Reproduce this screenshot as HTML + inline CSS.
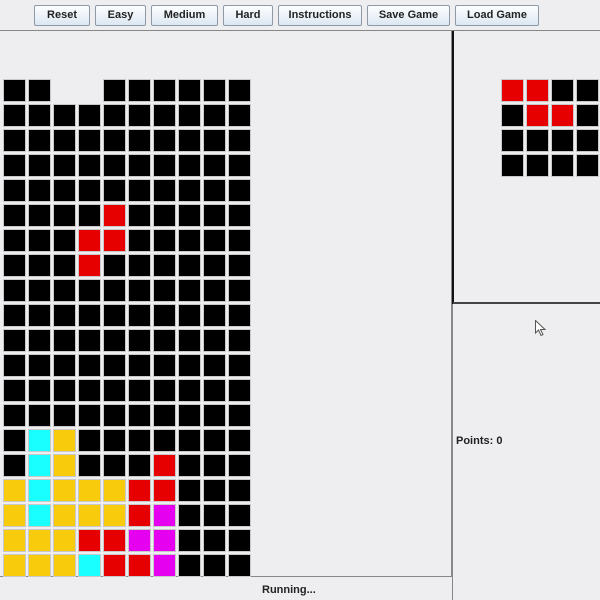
<!DOCTYPE html>
<html><head><style>
body{margin:0;width:600px;height:600px;background:#eeedef;position:relative;overflow:hidden;font-family:"Liberation Sans",sans-serif;}
.btn{position:absolute;top:5px;height:21px;box-sizing:border-box;border:1px solid #8e9aa8;background:linear-gradient(#fdfeff,#dce7f2);font-size:11px;font-weight:bold;color:#222;text-align:center;line-height:19px;border-radius:2px;}
.c{position:absolute;width:21px;height:21px;background:#000;box-shadow:0 0 0 1px #c8c8c8;}
.R{background:#e60000}.Y{background:#f8cc0c}.C{background:#19ffff}.M{background:#e600f0}
.t{position:absolute;font-size:11px;font-weight:bold;color:#222;}
</style></head><body>
<div class="btn" style="left:34px;width:56px">Reset</div>
<div class="btn" style="left:95px;width:51px">Easy</div>
<div class="btn" style="left:151px;width:67px">Medium</div>
<div class="btn" style="left:223px;width:50px">Hard</div>
<div class="btn" style="left:278px;width:84px">Instructions</div>
<div class="btn" style="left:367px;width:83px">Save Game</div>
<div class="btn" style="left:455px;width:84px">Load Game</div>
<div style="position:absolute;left:0;top:30px;width:452px;height:547px;border-top:1px solid #888;border-right:1px solid #888;border-bottom:1px solid #888;box-sizing:border-box"></div>
<div style="position:absolute;left:452px;top:30px;width:2px;height:274px;background:#111"></div>
<div style="position:absolute;left:452px;top:30px;width:148px;height:1px;background:#888"></div>
<div style="position:absolute;left:453px;top:302px;width:147px;height:2px;background:#444"></div>
<div style="position:absolute;left:452px;top:304px;width:1px;height:296px;background:#888"></div>
<div class="t" style="left:456px;top:435px">Points: 0</div>
<div class="t" style="left:262px;top:584px">Running...</div>
<div id="g"></div>
<script>
var rows=["BB..BBBBBB"];for(var i=1;i<5;i++)rows.push("BBBBBBBBBB");
rows.push("BBBBRBBBBB","BBBRRBBBBB","BBBRBBBBBB");
for(i=8;i<14;i++)rows.push("BBBBBBBBBB");
rows.push("BCYBBBBBBB","BCYBBBRBBB","YCYYYRRBBB","YCYYYRMBBB","YYYRRMMBBB","YYYCRRMBBB");
var h="";
rows.forEach(function(r,y){for(var x=0;x<10;x++){var ch=r[x];if(ch==".")continue;h+='<div class="c '+(ch=="B"?"":ch)+'" style="left:'+(4+25*x)+'px;top:'+(80+25*y)+'px"></div>';}});
var p=["RRBB","BRRB","BBBB","BBBB"];
p.forEach(function(r,y){for(var x=0;x<4;x++){var ch=r[x];h+='<div class="c '+(ch=="B"?"":ch)+'" style="left:'+(502+25*x)+'px;top:'+(80+25*y)+'px"></div>';}});
document.getElementById("g").innerHTML=h;
</script>
<svg style="position:absolute;left:535px;top:320px" width="12" height="18" viewBox="0 0 12 18"><path d="M0.5 0.5 L0.5 13 L3.5 10 L6 15.5 L8 14.5 L5.5 9.5 L10 9.5 Z" fill="#fff" stroke="#555" stroke-width="1"/></svg>
</body></html>
